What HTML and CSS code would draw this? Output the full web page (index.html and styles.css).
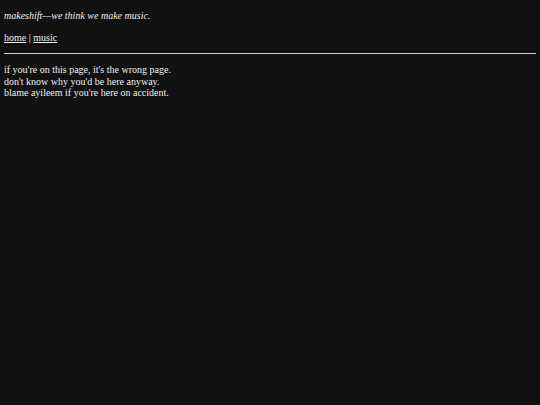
FILE: index.html
```html
<!DOCTYPE html>
<html>
<head>
<meta charset="utf-8">
<link rel="stylesheet" href="styles.css">
</head>
<body>
<p class="tagline"><i>makeshift—we think we make music.</i></p>
<nav class="nav"><a href="#">home</a> | <a href="#">music</a></nav>
<hr class="rule">
<p class="message">if you're on this page, it's the wrong page.<br>don't know why you'd be here anyway.<br>blame ayileem if you're here on accident.</p>
</body>
</html>
```
FILE: styles.css
```css
html { background: #111111; }
body {
  margin: 4px;
  background: #111111;
  color: #eeeeee;
  font-family: "Liberation Serif", "Times New Roman", serif;
  font-size: 10px;
  line-height: 11.5px;
}
.tagline { margin: 6px 0 10px; }
.nav { margin: 10px 0; }
.nav a { color: #eeeeee; }
.rule {
  border: none;
  border-top: 1px solid #cccccc;
  margin: 8px 0;
}
.message { margin: 10px 0; }
```
